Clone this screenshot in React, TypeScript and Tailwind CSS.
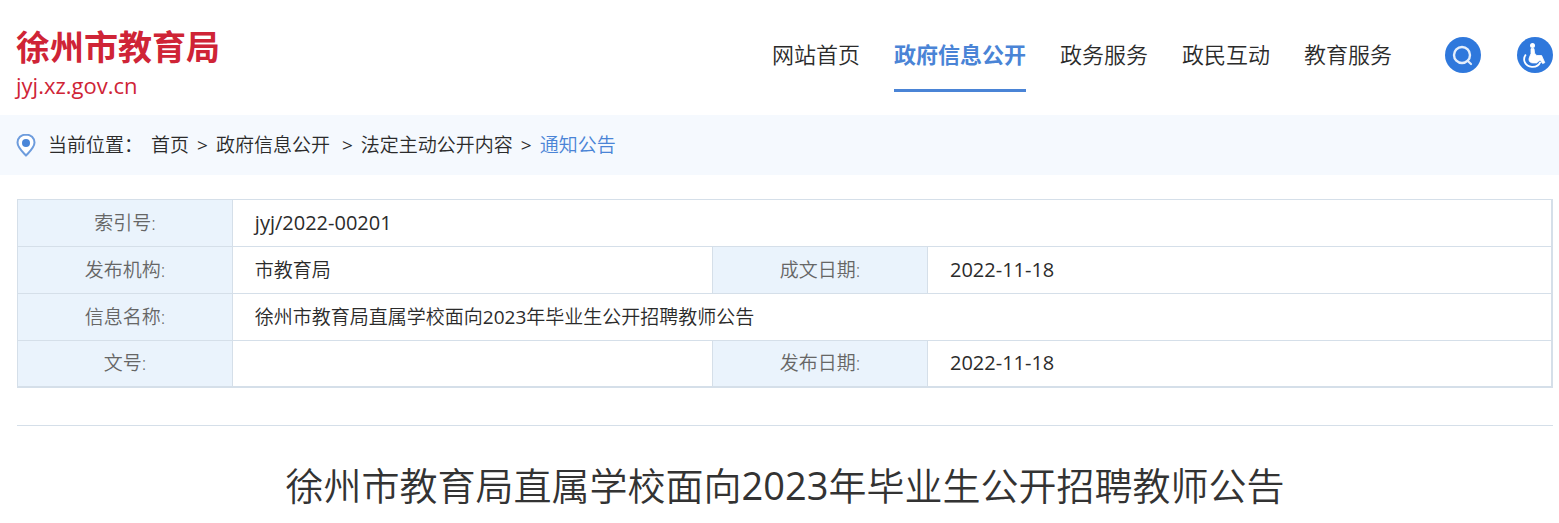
const NAV_ITEMS = [
  { label: "网站首页", active: false },
  { label: "政府信息公开", active: true },
  { label: "政务服务", active: false },
  { label: "政民互动", active: false },
  { label: "教育服务", active: false },
];

const CRUMBS = ["首页", "政府信息公开", "法定主动公开内容", "通知公告"];

const LABEL_CELL = "border border-[#d5dfe9] bg-[#eaf3fc] text-center font-[350] text-[#666]";
const VALUE_CELL = "border border-[#d5dfe9] px-[22px] text-left";

function SearchIcon() {
  return (
    <svg viewBox="0 0 36 36" className="size-9" fill="none" stroke="#e4eefb">
      <circle cx="18" cy="18" r="18" fill="#2f78dc" stroke="none" />
      <circle cx="17" cy="18" r="8" strokeWidth="2.4" />
      <path d="M22.8 24 26 27" strokeWidth="2.2" strokeLinecap="round" />
    </svg>
  );
}

function AccessIcon() {
  return (
    <svg viewBox="0 0 36 36" className="size-9" fill="none" stroke="#fff">
      <circle cx="18" cy="18" r="18" fill="#2f78dc" stroke="none" />
      <circle cx="15.5" cy="8.4" r="2.5" fill="#fff" stroke="none" />
      <path d="M14 11.6h3l.6 4.600 2 2.300h5l3.200 7.200-2.200.9-2.600-3.600-3.400 2.900h-3.800c-2.800 0-4.400-2.200-3.600-4.800l1.800-4.500z" fill="#fff" strokeWidth="0.8" strokeLinejoin="round" />
      <path d="M8.800 17.400c-3.700 5.200-.8 11.800 6 12.400 4 .3 7.300-1.800 8.600-5" strokeWidth="1.800" />
    </svg>
  );
}

function PinIcon() {
  return (
    <svg viewBox="0 0 20 24" className="h-6 w-5" fill="none">
      <path d="M10 1.4c-4.8 0-8.5 3.6-8.5 8.2 0 5 5.2 9.4 8.5 13 3.3-3.6 8.5-8 8.5-13 0-4.6-3.7-8.2-8.5-8.2z" fill="#fff" stroke="#6d9cdd" strokeWidth="2" strokeLinejoin="round" />
      <circle cx="10" cy="10" r="4" fill="#4a86d8" />
    </svg>
  );
}

function NoticeTitle() {
  return (
    <>
      徐州市教育局直属学校面向<span className="font-normal">2023</span>年毕业生公开招聘教师公告
    </>
  );
}

function SiteHeader() {
  return (
    <header className="flex items-start justify-between pr-[6px] pl-4">
      <a href="#" className="block pt-[25px] pb-[14px] text-[#cf2436]">
        <span className="block text-[34px] leading-[44px] font-bold">徐州市教育局</span>
        <span className="block text-[22px] leading-8">jyj.xz.gov.cn</span>
      </a>
      <div className="flex items-start">
        <nav className="flex gap-[34px] pt-9 text-[22px] leading-9">
          {NAV_ITEMS.map((item) => (
            <a
              key={item.label}
              href="#"
              className={
                item.active
                  ? "border-b-[3px] border-[#4a84d6] pb-[17px] font-bold text-[#4a84d6]"
                  : "font-[350]"
              }
            >
              {item.label}
            </a>
          ))}
        </nav>
        <div className="ml-[53px] flex gap-9 pt-[37px]">
          <button type="button" aria-label="搜索">
            <SearchIcon />
          </button>
          <button type="button" aria-label="无障碍">
            <AccessIcon />
          </button>
        </div>
      </div>
    </header>
  );
}

function Breadcrumb() {
  return (
    <div className="flex h-[60px] items-center bg-[#f5f9fe] pl-4 text-[19px] font-[350]">
      <PinIcon />
      <span className="ml-3">当前位置：</span>
      <ol className="ml-2 flex gap-2">
        {CRUMBS.map((crumb, i) => (
          <li key={crumb} className="flex gap-2">
            {i > 0 && <span className={i === 2 ? "ml-1 font-normal" : "font-normal"}>&gt;</span>}
            <a href="#" className={i === CRUMBS.length - 1 ? "text-[#4a84d6]" : ""}>
              {crumb}
            </a>
          </li>
        ))}
      </ol>
    </div>
  );
}

function InfoTable() {
  return (
    <table className="w-full table-fixed border-collapse border-r-2 border-b-2 border-[#d5dfe9] text-[19px]">
      <colgroup>
        <col className="w-[14%]" />
        <col className="w-[31.3%]" />
        <col className="w-[14%]" />
        <col />
      </colgroup>
      <tbody>
        <tr className="h-[47px]">
          <th scope="row" className={LABEL_CELL}>索引号:</th>
          <td colSpan={3} className={`${VALUE_CELL} text-[20px]`}>jyj/2022-00201</td>
        </tr>
        <tr className="h-[47px]">
          <th scope="row" className={LABEL_CELL}>发布机构:</th>
          <td className={`${VALUE_CELL} font-[350]`}>市教育局</td>
          <th scope="row" className={LABEL_CELL}>成文日期:</th>
          <td className={`${VALUE_CELL} text-[20px]`}>2022-11-18</td>
        </tr>
        <tr className="h-[47px]">
          <th scope="row" className={LABEL_CELL}>信息名称:</th>
          <td colSpan={3} className={`${VALUE_CELL} font-[350]`}>
            <NoticeTitle />
          </td>
        </tr>
        <tr className="h-[46px]">
          <th scope="row" className={LABEL_CELL}>文号:</th>
          <td className={VALUE_CELL}></td>
          <th scope="row" className={LABEL_CELL}>发布日期:</th>
          <td className={`${VALUE_CELL} text-[20px]`}>2022-11-18</td>
        </tr>
      </tbody>
    </table>
  );
}

export default function App() {
  return (
    <div className="bg-white font-['Open_Sans','Noto_Sans_CJK_SC',sans-serif] text-[#2b2b2b]">
      <SiteHeader />
      <Breadcrumb />
      <main className="pt-6 pr-[6px] pl-[17px]">
        <InfoTable />
        <h1 className="mt-[37px] border-t border-[#d5dfe9] pt-[29px] text-center text-[38px] leading-[60px] font-[350] text-[#333]">
          <NoticeTitle />
        </h1>
      </main>
    </div>
  );
}
